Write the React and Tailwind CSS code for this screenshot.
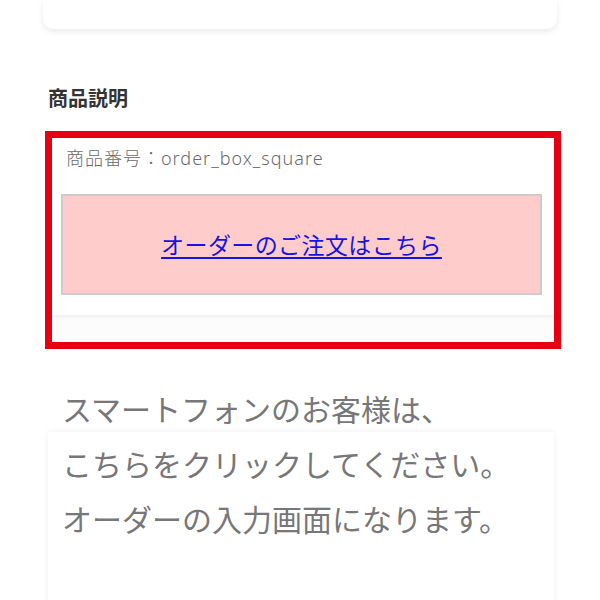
import React from 'react';

const jp = "font-['Noto_Sans','Noto_Sans_CJK_JP',sans-serif]";

const App = () => {
    return (
        <div className={`w-[600px] h-[600px] overflow-hidden bg-white ${jp}`}>
            {/* Previous card (bottom edge only) */}
            <div className="ml-[43px] w-[514px] h-[29px] bg-white rounded-b-[10px] shadow-[0_3px_6px_rgba(0,0,0,0.08)]" />

            {/* Section heading */}
            <h2 className="mt-[56px] ml-[48px] text-[20px] leading-[28px] font-bold text-[#333]">商品説明</h2>

            {/* Highlighted product description */}
            <div className="mt-[18px] ml-[45px] w-[516px] h-[218px] border-[7px] border-[#e60012] bg-[#fcfcfc]">
                <div className="h-[177px] bg-white shadow-[0_2px_4px_rgba(0,0,0,0.06)] pt-[8px]">
                    <p className="ml-[14px] text-[18px] leading-[24px] tracking-[1px] font-light text-[#6b6b6b]">商品番号：order_box_square</p>
                    <div className="mt-[24px] ml-[9px] mr-[12px] h-[101px] bg-[#ffcccc] border-2 border-[#cccccc] flex items-center justify-center">
                        <a href="#" className="text-[23px] leading-[30px] tracking-[0.4px] text-[#1414e6] underline underline-offset-[3px]">
                            オーダーのご注文はこちら
                        </a>
                    </div>
                </div>
            </div>

            {/* Smartphone notice */}
            <p className="mt-[36px] ml-[62px] text-[30px] leading-[50px] text-[#777]">スマートフォンのお客様は、</p>
            <div className="-mt-[3px] ml-[48px] w-[506px] h-[200px] bg-white shadow-[0_0_6px_rgba(0,0,0,0.07)] pl-[14px] pt-[5px]">
                <p className="text-[30px] leading-[55px] text-[#777]">
                    こちらをクリックしてください。<br />
                    オーダーの入力画面になります。
                </p>
            </div>
        </div>
    );
};

export default App;
